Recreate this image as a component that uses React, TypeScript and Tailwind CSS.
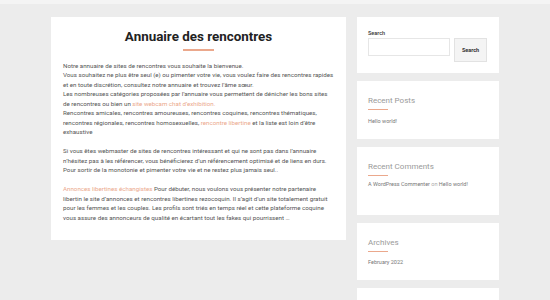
import React from "react";

const link = "text-[#eba88c]";

function Widget({ title, children, className = "" }: { title: string; children: React.ReactNode; className?: string }) {
  return (
    <div className={`bg-white px-[11px] pt-[15px] ${className}`}>
      <div className="text-[8px] leading-[10px] text-[#9a9a9a]">{title}</div>
      <div className="mt-[3px] h-px w-[20px] bg-[#eba88c]" />
      {children}
    </div>
  );
}

export default function App() {
  return (
    <div className="h-[300px] w-[550px] overflow-hidden bg-[#ececec] font-['Roboto',sans-serif]">
      <div className="h-[4px] bg-[#f4f4f4]" />
      <div className="flex items-start justify-center gap-[11px] pt-[13px]">
        <main className="w-[295px] bg-white px-[12px] pb-[17px] pt-[10px]">
          <h1 className="text-center text-[13.4px] font-bold leading-[20px] text-[#222]">Annuaire des rencontres</h1>
          <div className="mx-auto mt-[2px] h-[1.5px] w-[31px] bg-[#eba88c]" />
          <div className="mt-[11px] text-[6.2px] leading-[9.5px] text-[#555]">
            <p>
              Notre annuaire de sites de rencontres vous souhaite la bienvenue.
              <br />
              Vous souhaitez ne plus être seul (e) ou pimenter votre vie, vous voulez faire des rencontres rapides et en toute discrétion, consultez notre annuaire et trouvez l’âme sœur.
              <br />
              Les nombreuses catégories proposées par l’annuaire vous permettent de dénicher les bons sites de rencontres ou bien un <span className={link}>site webcam chat d’exhibition.</span>
              <br />
              Rencontres amicales, rencontres amoureuses, rencontres coquines, rencontres thématiques, rencontres régionales, rencontres homosexuelles, <span className={link}>rencontre libertine</span> et la liste est loin d’être exhaustive
            </p>
            <p className="mt-[9.5px]">
              Si vous êtes webmaster de sites de rencontres intéressant et qui ne sont pas dans l’annuaire n’hésitez pas à les référencer, vous bénéficierez d’un référencement optimisé et de liens en durs. Pour sortir de la monotonie et pimenter votre vie et ne restez plus jamais seul..
            </p>
            <p className="mt-[9.5px]">
              <span className={link}>Annonces libertines échangistes</span> Pour débuter, nous voulons vous présenter notre partenaire libertin le site d’annonces et rencontres libertines rezocoquin. Il s’agit d’un site totalement gratuit pour les femmes et les couples. Les profils sont triés en temps réel et cette plateforme coquine vous assure des annonceurs de qualité en écartant tout les fakes qui pourrissent …
            </p>
          </div>
        </main>
        <aside className="flex w-[142px] flex-col gap-[8px]">
          <div className="bg-white px-[11px] pb-[11px] pt-[13px]">
            <div className="text-[5.5px] font-medium leading-[7px] text-[#333]">Search</div>
            <div className="mt-[1px] flex items-start gap-[4px]">
              <div className="h-[18px] w-[82px] border border-[#e6e6e6] bg-white" />
              <div className="flex h-[24px] w-[33px] items-center justify-center border border-[#e2e2e2] bg-[#f4f4f4] text-[5.5px] font-bold text-[#333]">
                Search
              </div>
            </div>
          </div>
          <Widget title="Recent Posts" className="h-[58px]">
            <div className="mt-[8px] text-[5.5px] leading-[7px] text-[#777]">Hello world!</div>
          </Widget>
          <Widget title="Recent Comments" className="h-[68px]">
            <div className="mt-[5px] text-[5.5px] leading-[7px] text-[#777]">
              A WordPress Commenter <span className="text-[#aaa]">on</span> Hello world!
            </div>
          </Widget>
          <Widget title="Archives" className="h-[57px]">
            <div className="mt-[7px] text-[5.5px] leading-[7px] text-[#777]">February 2022</div>
          </Widget>
          <div className="h-[40px] bg-white" />
        </aside>
      </div>
    </div>
  );
}
